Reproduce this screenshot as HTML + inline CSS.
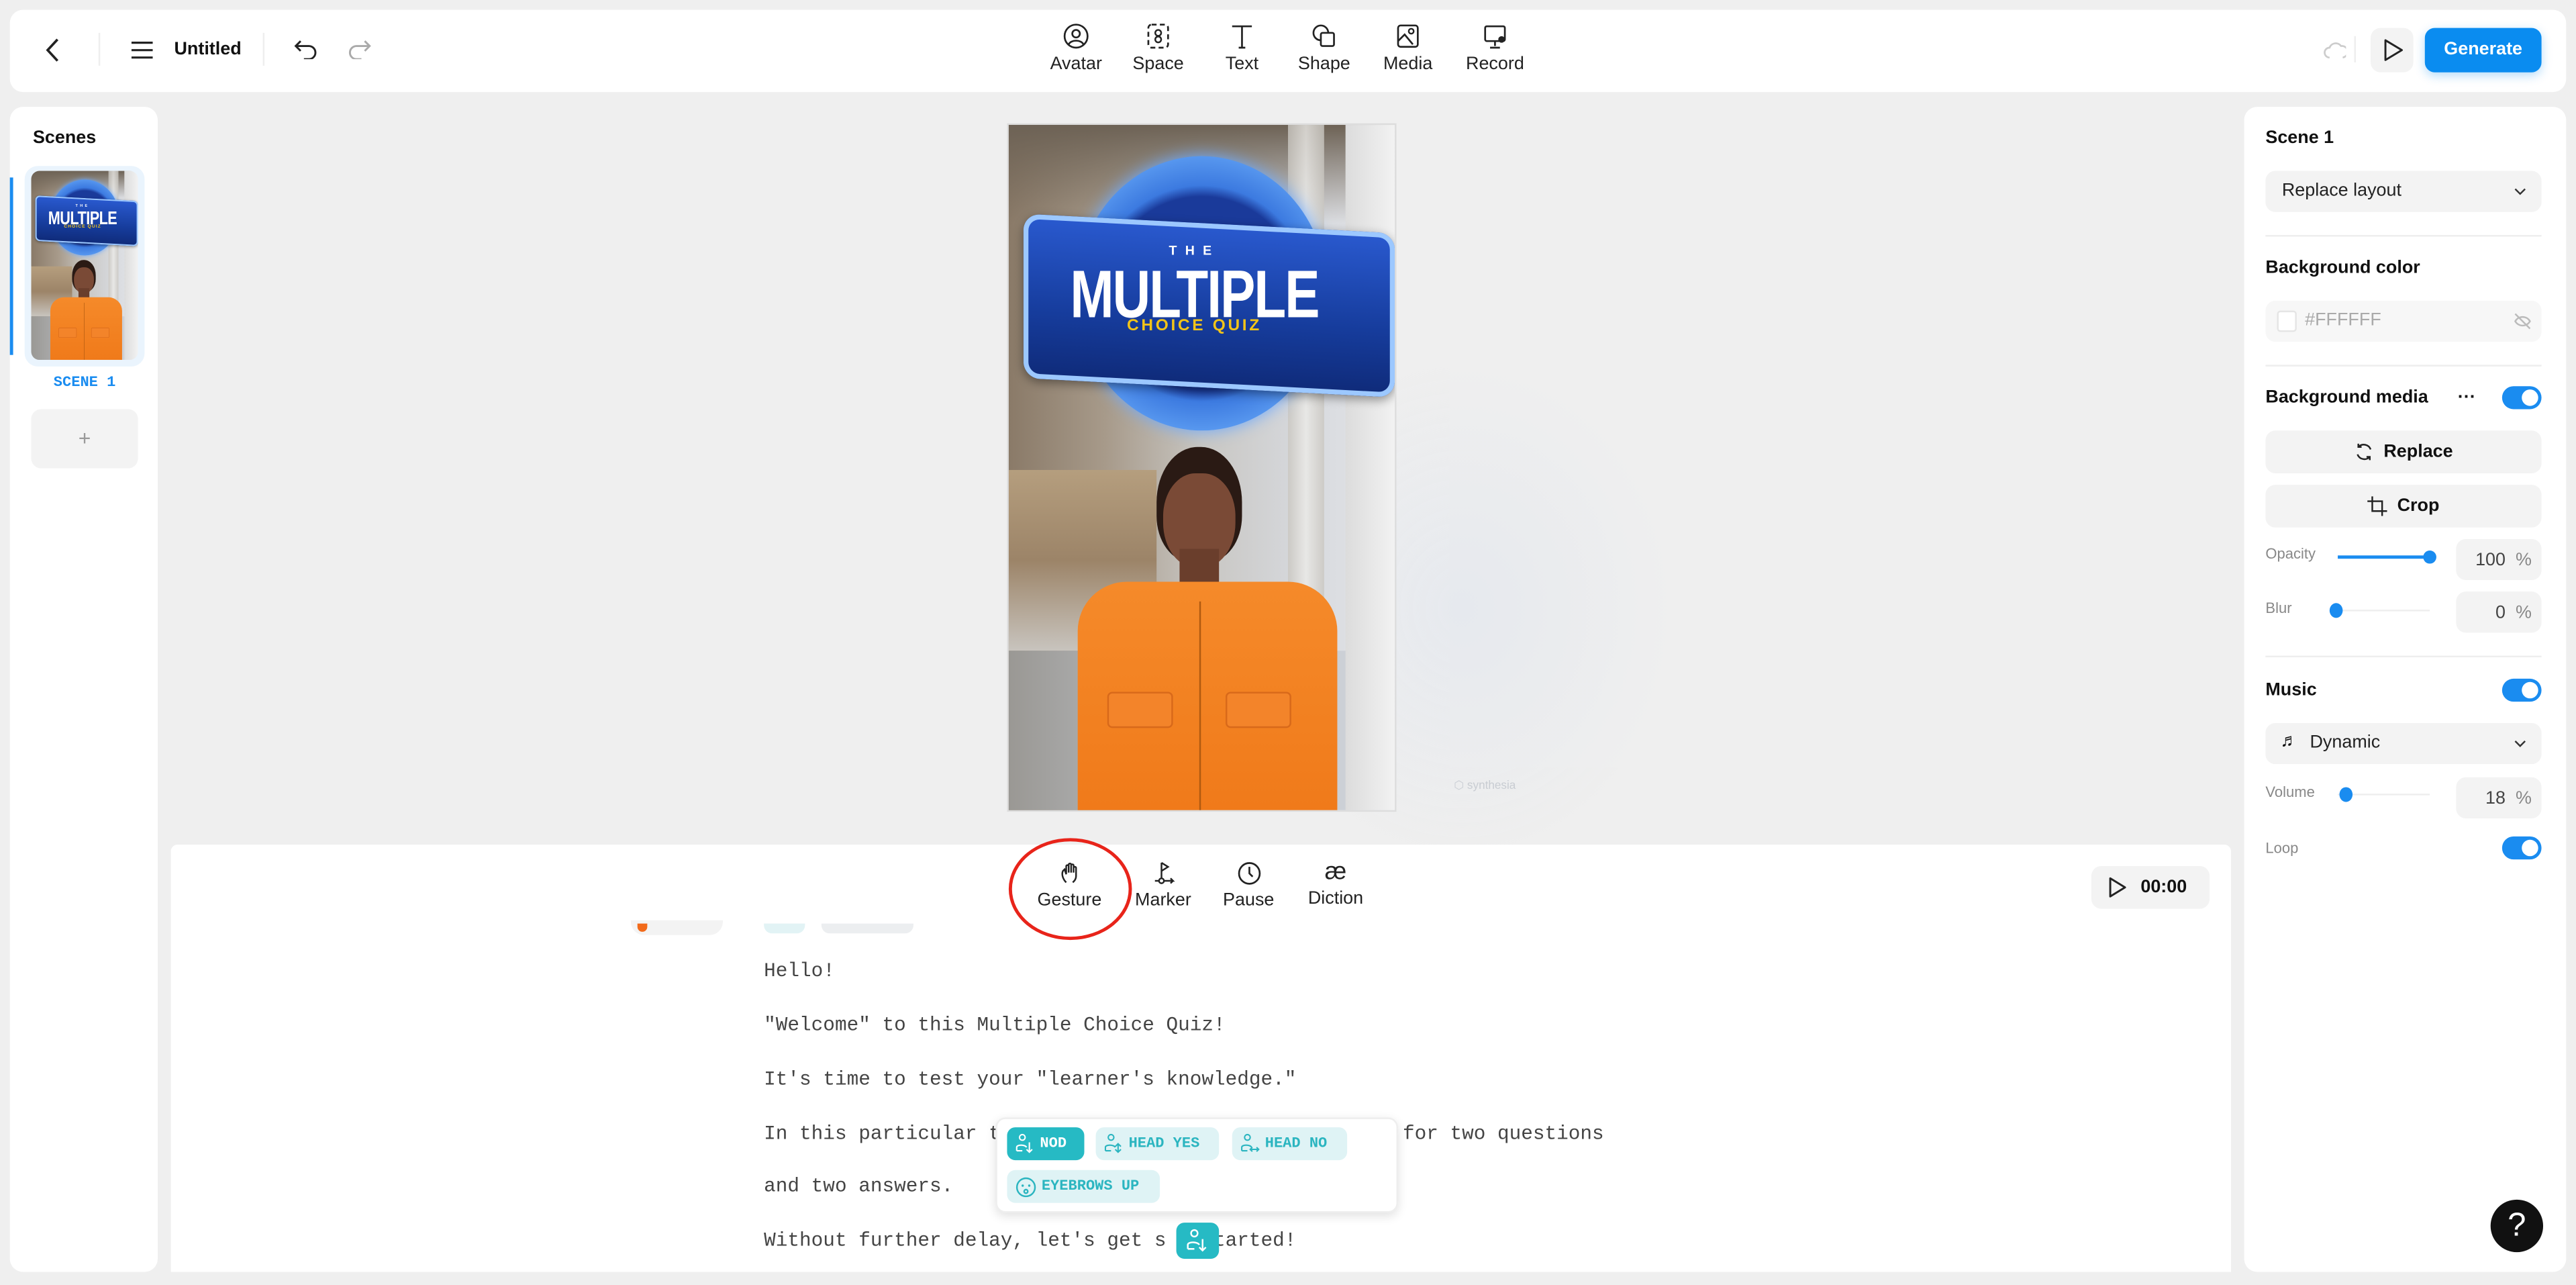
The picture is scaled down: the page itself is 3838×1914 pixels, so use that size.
<!DOCTYPE html>
<html><head><meta charset="utf-8"><style>
*{box-sizing:border-box;margin:0;padding:0}
html,body{width:3838px;height:1914px;overflow:hidden;background:#efefef}
#w{position:absolute;left:0;top:0;width:1568px;height:782px;transform:scale(2.44770);transform-origin:0 0;font-family:"Liberation Sans",sans-serif;color:#111}
.a{position:absolute}
.card{position:absolute;background:#fff;border-radius:8px}
.tb{position:absolute;top:14px;width:50px;text-align:center;font-size:11px;color:#222}
.tb svg{display:block;margin:0 auto 3px}
.lbl{font-size:11px;font-weight:bold;color:#111}
.gray{font-size:9px;color:#888}
.btn{position:absolute;left:1379px;width:168px;height:26px;background:#f3f3f3;border-radius:6px;font-size:11px;font-weight:bold;display:flex;align-items:center;justify-content:center;gap:6px}
.tog{position:absolute;left:1523px;width:24px;height:14px;border-radius:7px;background:#1a8cf0}
.tog:after{content:"";position:absolute;right:2px;top:2px;width:10px;height:10px;border-radius:50%;background:#fff}
.num{position:absolute;left:1495px;width:52px;height:25px;background:#f3f3f3;border-radius:6px;font-size:11px;color:#444;text-align:right;padding:7px 6px 0 0}
.line{position:absolute;left:465px;font-family:"Liberation Mono",monospace;font-size:12px;color:#444;white-space:pre}
.chip{position:absolute;height:20px;border-radius:5px;background:#dff3f5;color:#2bb5c0;font-family:"Liberation Mono",monospace;font-weight:bold;font-size:9px;display:flex;align-items:center;gap:3px;padding:0 5px}
.sc{position:absolute;width:235px;height:417px;overflow:hidden;background:linear-gradient(90deg,#8a7a68 0%,#a79a8a 25%,#c8c6c2 50%,#d6d8dc 75%,#e4e6ea 100%)}
</style></head><body><div id="w">

<!-- top bar -->
<div class="card" style="left:6px;top:6px;width:1556px;height:50px"></div>
<svg class="a" style="left:26px;top:23px" width="12" height="15" viewBox="0 0 12 15"><path d="M9 1L3 7.5 9 14" fill="none" stroke="#222" stroke-width="1.5"/></svg>
<div class="a" style="left:60px;top:20px;width:1px;height:20px;background:#eee"></div>
<svg class="a" style="left:80px;top:25px" width="13" height="11"><path d="M0 1h13M0 5.5h13M0 10h13" stroke="#222" stroke-width="1.3"/></svg>
<div class="a" style="left:106px;top:24px;font-size:11px;font-weight:bold">Untitled</div>
<div class="a" style="left:160px;top:20px;width:1px;height:20px;background:#eee"></div>
<svg class="a" style="left:179px;top:24px" width="14" height="12" viewBox="0 0 14 12"><path d="M4 1L1 4l3 3M1 4h8a4 4 0 010 8H6" fill="none" stroke="#222" stroke-width="1.2"/></svg>
<svg class="a" style="left:212px;top:24px" width="14" height="12" viewBox="0 0 14 12"><path d="M10 1l3 3-3 3M13 4H5a4 4 0 000 8h3" fill="none" stroke="#aaa" stroke-width="1.2"/></svg>

<div class="tb" style="left:630px"><svg width="16" height="16" viewBox="0 0 16 16"><circle cx="8" cy="8" r="7" fill="none" stroke="#222" stroke-width="1.1"/><circle cx="8" cy="6.5" r="2.3" fill="none" stroke="#222" stroke-width="1.1"/><path d="M3.5 13c1.5-3 7.5-3 9 0" fill="none" stroke="#222" stroke-width="1.1"/></svg>Avatar</div>
<div class="tb" style="left:680px"><svg width="16" height="16" viewBox="0 0 16 16"><rect x="2" y="1" width="12" height="14" rx="2" fill="none" stroke="#222" stroke-width="1.1" stroke-dasharray="3 2"/><circle cx="8" cy="6" r="1.8" fill="none" stroke="#222"/><circle cx="8" cy="10" r="1.8" fill="none" stroke="#222"/></svg>Space</div>
<div class="tb" style="left:731px"><svg width="16" height="16" viewBox="0 0 16 16"><path d="M2 2h12M8 2v13M6 15h4" fill="none" stroke="#222" stroke-width="1.1"/></svg>Text</div>
<div class="tb" style="left:781px"><svg width="16" height="16" viewBox="0 0 16 16"><circle cx="6" cy="6" r="4.5" fill="none" stroke="#222" stroke-width="1.1"/><rect x="6" y="6" width="8" height="8" rx="1" fill="#fff" stroke="#222" stroke-width="1.1"/></svg>Shape</div>
<div class="tb" style="left:832px"><svg width="16" height="16" viewBox="0 0 16 16"><rect x="2" y="1.5" width="12" height="13" rx="1.5" fill="none" stroke="#222" stroke-width="1.1"/><circle cx="10" cy="5" r="1.5" fill="none" stroke="#222"/><path d="M2 11l4-4 5 6" fill="none" stroke="#222" stroke-width="1.1"/></svg>Media</div>
<div class="tb" style="left:885px"><svg width="16" height="16" viewBox="0 0 16 16"><rect x="2" y="2" width="12" height="9" rx="1" fill="none" stroke="#222" stroke-width="1.1"/><path d="M8 11v3M5 15h6" stroke="#222" stroke-width="1.1"/><circle cx="12" cy="10" r="2" fill="#222"/></svg>Record</div>

<svg class="a" style="left:1414px;top:24px" width="14" height="13" viewBox="0 0 14 13"><path d="M4 11a3 3 0 010-6 4 4 0 017-1 3 3 0 011 7" fill="none" stroke="#ccc" stroke-width="1.1"/></svg>
<div class="a" style="left:1433px;top:22px;width:1px;height:16px;background:#eee"></div>
<div class="a" style="left:1443px;top:17px;width:26px;height:27px;background:#f3f3f3;border-radius:6px"></div>
<svg class="a" style="left:1450px;top:23px" width="13" height="15"><path d="M2 1.5v12l10-6z" fill="none" stroke="#222" stroke-width="1.2" stroke-linejoin="round"/></svg>
<div class="a" style="left:1476px;top:17px;width:71px;height:27px;background:#0a8cf0;border-radius:6px;color:#fff;font-size:11px;font-weight:bold;text-align:center;line-height:27px;box-shadow:0 2px 6px rgba(10,140,240,.3)">Generate</div>

<!-- left panel -->
<div class="card" style="left:6px;top:65px;width:90px;height:709px"></div>
<div class="a lbl" style="left:20px;top:78px">Scenes</div>
<div class="a" style="left:6px;top:108px;width:2px;height:108px;background:#1a8cf0"></div>
<div class="a" style="left:15px;top:101px;width:73px;height:122px;border-radius:8px;background:#eaf4fd"></div>
<div class="a" style="left:19px;top:104px;width:65px;height:115px;border-radius:5px;overflow:hidden">
 <div id="thumb" style="position:absolute;left:0;top:0;width:235px;height:417px;transform:scale(.2766);transform-origin:0 0"></div>
</div>
<div class="a" style="left:20px;top:228px;width:63px;text-align:center;font-family:'Liberation Mono',monospace;font-size:9px;font-weight:bold;color:#1a8cf0">SCENE 1</div>
<div class="a" style="left:19px;top:249px;width:65px;height:36px;border-radius:6px;background:#f3f3f3;color:#999;text-align:center;line-height:36px;font-size:13px">+</div>

<!-- canvas glow -->
<div class="a" style="left:760px;top:220px;width:260px;height:300px;border-radius:50%;background:radial-gradient(ellipse,#e6e9ee 0%,rgba(239,239,239,0) 70%)"></div>
<div class="a" style="left:613px;top:75px;width:237px;height:419px;border:1px solid #ddd"></div>
<div class="sc" id="main" style="left:614px;top:76px">
 <div class="a" style="left:0;top:0;width:235px;height:60px;background:linear-gradient(180deg,#6d6255,rgba(160,150,135,0))"></div>
 <div class="a" style="left:0;top:210px;width:90px;height:110px;background:linear-gradient(180deg,#b59e7e,#9c8468 50%,#c8c4be)"></div>
 <div class="a" style="left:0;top:320px;width:235px;height:97px;background:linear-gradient(90deg,#9a9894,#c0c4ca 50%,#d0d4da)"></div>
 <div class="a" style="left:170px;top:0;width:22px;height:417px;background:linear-gradient(90deg,#c9c6c0,#ecebe8,#c9c6c0);opacity:.8"></div>
 <div class="a" style="left:205px;top:0;width:30px;height:417px;background:linear-gradient(90deg,#dcdcdc,#f2f2f2)"></div>
 <div class="a" style="left:41px;top:19px;width:153px;height:167px;border-radius:50%;background:radial-gradient(circle,#1a3a9a 52%,#3c7ae0 58%,#5a9af0 75%,#2a5ac0 80%);box-shadow:0 0 10px #6aa8ff"></div>
 <div class="a" style="left:9px;top:60px;width:226px;height:100px;border-radius:10px;background:linear-gradient(180deg,#2a5ad0,#163c9c 60%,#0f2a78);transform:skewY(3deg);box-shadow:0 0 0 3px #9cc8ff inset,0 2px 6px rgba(0,0,0,.4)"></div>
 <div class="a" style="left:0;top:72px;width:226px;text-align:center;color:#fff;font-size:8px;font-weight:bold;letter-spacing:5px">THE</div>
 <div class="a" style="left:-2px;top:80px;width:230px;text-align:center;color:#fff;font-size:41px;font-weight:bold;letter-spacing:-1px;transform:scaleX(.78)">MULTIPLE</div>
 <div class="a" style="left:0;top:117px;width:226px;text-align:center;color:#f2c418;font-size:10px;font-weight:bold;letter-spacing:1.5px">CHOICE QUIZ</div>
 <div class="a" style="left:90px;top:196px;width:52px;height:70px;border-radius:48% 48% 40% 40%;background:#2a1a14"></div>
 <div class="a" style="left:94px;top:212px;width:44px;height:58px;border-radius:45% 45% 48% 48%;background:#7a4a36"></div>
 <div class="a" style="left:104px;top:258px;width:24px;height:30px;background:#6a3e2c"></div>
 <div class="a" style="left:42px;top:278px;width:158px;height:139px;border-radius:30px 30px 0 0;background:linear-gradient(180deg,#f58a2a,#f07a1a)"></div>
 <div class="a" style="left:60px;top:345px;width:40px;height:22px;border-radius:3px;background:#f3842a;border:1px solid #d8691a"></div>
 <div class="a" style="left:132px;top:345px;width:40px;height:22px;border-radius:3px;background:#f3842a;border:1px solid #d8691a"></div>
 <div class="a" style="left:116px;top:290px;width:1px;height:127px;background:#b05a10"></div>
</div>
<div class="a" style="left:885px;top:474px;font-size:7px;color:#c8ccd2">⬡ synthesia</div>

<!-- script panel -->
<div class="a" style="left:104px;top:514px;width:1254px;height:260px;background:#fff;border-radius:4px 4px 0 0"></div>
<div class="tb" style="left:626px;top:524px"><svg width="15" height="15" viewBox="0 0 15 15"><path d="M5 13c-2-2-3-5-2-7l1-1 1 3V3a.8.8 0 011.5 0v4V2a.8.8 0 011.5 0v5V2.5a.8.8 0 011.5 0V7V4a.8.8 0 011.5 0v5c0 2-1 3-2 4" fill="none" stroke="#222" stroke-width="1"/></svg>Gesture</div>
<div class="tb" style="left:683px;top:524px"><svg width="15" height="15" viewBox="0 0 15 15"><path d="M6 1v10M6 1l4 2.5L6 6" fill="none" stroke="#222" stroke-width="1"/><circle cx="6" cy="12" r="1.5" fill="none" stroke="#222"/><path d="M2 12h2.5M7.5 12H13l-1.5-1.5M13 12l-1.5 1.5" fill="none" stroke="#222" stroke-width="1"/></svg>Marker</div>
<div class="tb" style="left:735px;top:524px"><svg width="15" height="15" viewBox="0 0 15 15"><circle cx="7.5" cy="7.5" r="6.3" fill="none" stroke="#222" stroke-width="1.1"/><path d="M7.5 3.5v4l2 2" fill="none" stroke="#222" stroke-width="1.1"/></svg>Pause</div>
<div class="tb" style="left:788px;top:523px;font-size:11px"><div style="font-size:15px;line-height:16px;margin-bottom:2px">æ</div>Diction</div>
<div class="a" style="left:614px;top:510px;width:75px;height:62px;border:2px solid #e8241a;border-radius:50%"></div>
<div class="a" style="left:1273px;top:527px;width:72px;height:26px;background:#f3f3f3;border-radius:6px"></div>
<svg class="a" style="left:1283px;top:533px" width="12" height="14"><path d="M1.5 1.5v11l9-5.5z" fill="none" stroke="#222" stroke-width="1.2" stroke-linejoin="round"/></svg>
<div class="a" style="left:1303px;top:534px;font-size:11px;font-weight:bold">00:00</div>
<div class="a" style="left:384px;top:560px;width:56px;height:9px;border-radius:0 0 8px 8px;background:#f3f3f3"></div>
<div class="a" style="left:388px;top:562px;width:6px;height:5px;border-radius:0 0 3px 3px;background:#f26a1a"></div>
<div class="a" style="left:465px;top:562px;width:25px;height:6px;border-radius:0 0 5px 5px;background:#e2f3f5"></div>
<div class="a" style="left:500px;top:562px;width:56px;height:6px;border-radius:0 0 5px 5px;background:#eceef0"></div>

<div class="line" style="top:584px">Hello!</div>
<div class="line" style="top:617px">"Welcome" to this Multiple Choice Quiz!</div>
<div class="line" style="top:650px">It's time to test your "learner's knowledge."</div>
<div class="line" style="top:683px">In this particular t                                  for two questions</div>
<div class="line" style="top:715px">and two answers.</div>
<div class="line" style="top:748px">Without further delay, let's get s    tarted!</div>
<div class="a" style="left:716px;top:744px;width:26px;height:22px;border-radius:5px;background:#26bac4"></div>
<svg class="a" style="left:722px;top:747px" width="14" height="16" viewBox="0 0 14 16"><circle cx="5" cy="3.5" r="2" fill="none" stroke="#fff"/><path d="M1 13v-2.5c0-2 6-2 7 0M1 13h4M10 7v7M8 12l2 2 2-2" fill="none" stroke="#fff" stroke-width="1"/></svg>

<!-- gesture popup -->
<div class="a" style="left:606px;top:680px;width:245px;height:58px;background:#fff;border-radius:6px;box-shadow:0 2px 6px rgba(0,0,0,.12);border:1px solid #eee"></div>
<div class="chip" style="left:613px;top:686px;width:47px;background:#26bac4;color:#fff"><svg width="12" height="14" viewBox="0 0 14 16"><circle cx="5" cy="3.5" r="2" fill="none" stroke="#fff"/><path d="M1 13v-2.5c0-2 6-2 7 0M1 13h4M10 7v7M8 12l2 2 2-2" fill="none" stroke="#fff"/></svg>NOD</div>
<div class="chip" style="left:667px;top:686px;width:75px"><svg width="12" height="14" viewBox="0 0 14 16"><circle cx="5" cy="3.5" r="2" fill="none" stroke="#2bb5c0"/><path d="M1 13v-2.5c0-2 6-2 7 0M1 13h4M10 8v6M8 10l2-2 2 2M8 12l2 2 2-2" fill="none" stroke="#2bb5c0"/></svg>HEAD YES</div>
<div class="chip" style="left:750px;top:686px;width:70px"><svg width="12" height="14" viewBox="0 0 14 16"><circle cx="5" cy="3.5" r="2" fill="none" stroke="#2bb5c0"/><path d="M1 13v-2.5c0-2 6-2 7 0M1 13h4M7 12h6M8.5 10.5L7 12l1.5 1.5M11.5 10.5L13 12l-1.5 1.5" fill="none" stroke="#2bb5c0"/></svg>HEAD NO</div>
<div class="chip" style="left:613px;top:712px;width:93px"><svg width="13" height="13" viewBox="0 0 13 13"><circle cx="6.5" cy="6.5" r="5.5" fill="none" stroke="#2bb5c0"/><circle cx="4.5" cy="5.5" r=".7" fill="#2bb5c0"/><circle cx="8.5" cy="5.5" r=".7" fill="#2bb5c0"/><circle cx="6.5" cy="9" r="1.1" fill="none" stroke="#2bb5c0"/></svg>EYEBROWS UP</div>

<!-- right panel -->
<div class="card" style="left:1366px;top:65px;width:196px;height:709px"></div>
<div class="a lbl" style="left:1379px;top:78px">Scene 1</div>
<div class="a" style="left:1379px;top:104px;width:168px;height:25px;background:#f3f3f3;border-radius:6px;font-size:11px;color:#222;padding:6px 10px">Replace layout</div>
<svg class="a" style="left:1530px;top:114px" width="8" height="6"><path d="M1 1l3 3 3-3" fill="none" stroke="#333"/></svg>
<div class="a" style="left:1379px;top:143px;width:168px;height:1px;background:#eee"></div>
<div class="a lbl" style="left:1379px;top:157px">Background color</div>
<div class="a" style="left:1379px;top:183px;width:168px;height:25px;background:#f7f7f7;border-radius:6px;font-size:11px;color:#aaa;padding:6px 0 0 24px">#FFFFFF</div>
<div class="a" style="left:1386px;top:189px;width:12px;height:13px;border:1px solid #e5e5e5;background:#fff;border-radius:2px"></div>
<svg class="a" style="left:1530px;top:190px" width="11" height="11"><path d="M1 5.5c2-3.5 7-3.5 9 0-2 3.5-7 3.5-9 0zM1 1l9 9" fill="none" stroke="#bbb"/></svg>
<div class="a" style="left:1379px;top:222px;width:168px;height:1px;background:#eee"></div>
<div class="a lbl" style="left:1379px;top:236px">Background media</div>
<div class="a" style="left:1496px;top:236px;font-size:11px;font-weight:bold">···</div>
<div class="tog" style="top:235px"></div>
<div class="btn" style="top:262px"><svg width="12" height="12" viewBox="0 0 12 12"><path d="M10 4.5A4.5 4.5 0 002.5 3M2 7.5A4.5 4.5 0 009.5 9M2.5 1v2h2M9.5 11V9h-2" fill="none" stroke="#222"/></svg>Replace</div>
<div class="btn" style="top:295px"><svg width="12" height="12" viewBox="0 0 12 12"><path d="M3 0v9h9M0 3h9v9" fill="none" stroke="#222"/></svg>Crop</div>
<div class="a gray" style="left:1379px;top:332px">Opacity</div>
<div class="a" style="left:1423px;top:338px;width:56px;height:2px;background:#1a8cf0"></div>
<div class="a" style="left:1475px;top:335px;width:8px;height:8px;border-radius:50%;background:#1a8cf0"></div>
<div class="num" style="top:328px">100 &nbsp;<span style="color:#888">%</span></div>
<div class="a gray" style="left:1379px;top:365px">Blur</div>
<div class="a" style="left:1423px;top:371px;width:56px;height:1px;background:#eee"></div>
<div class="a" style="left:1418px;top:367px;width:8px;height:9px;border-radius:50%;background:#1a8cf0"></div>
<div class="num" style="top:360px">0 &nbsp;<span style="color:#888">%</span></div>
<div class="a" style="left:1379px;top:399px;width:168px;height:1px;background:#eee"></div>
<div class="a lbl" style="left:1379px;top:414px">Music</div>
<div class="tog" style="top:413px"></div>
<div class="a" style="left:1379px;top:440px;width:168px;height:25px;background:#f3f3f3;border-radius:6px;font-size:11px;color:#222;padding:6px 0 0 27px">Dynamic</div>
<div class="a" style="left:1388px;top:445px;font-size:11px">♬</div>
<svg class="a" style="left:1530px;top:450px" width="8" height="6"><path d="M1 1l3 3 3-3" fill="none" stroke="#333"/></svg>
<div class="a gray" style="left:1379px;top:477px">Volume</div>
<div class="a" style="left:1423px;top:483px;width:56px;height:1px;background:#eee"></div>
<div class="a" style="left:1424px;top:479px;width:8px;height:9px;border-radius:50%;background:#1a8cf0"></div>
<div class="num" style="top:473px">18 &nbsp;<span style="color:#888">%</span></div>
<div class="a gray" style="left:1379px;top:511px">Loop</div>
<div class="tog" style="top:509px"></div>

<div class="a" style="left:1516px;top:730px;width:32px;height:32px;border-radius:50%;background:#111;color:#fff;font-size:20px;text-align:center;line-height:32px">?</div>
</div>
<script>
document.getElementById('thumb').innerHTML=document.getElementById('main').outerHTML.replace('id="main" style="left:614px;top:76px"','style="left:0;top:0"');
</script>
</body></html>
